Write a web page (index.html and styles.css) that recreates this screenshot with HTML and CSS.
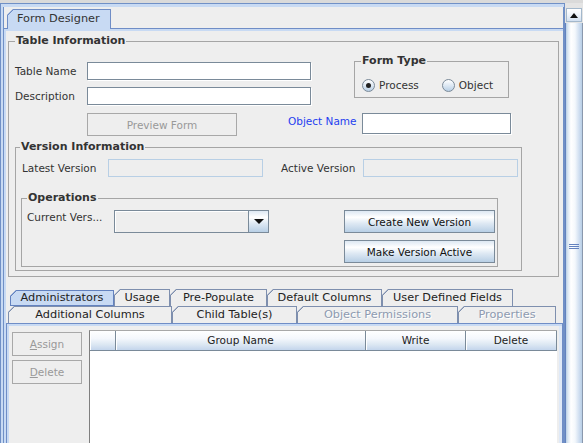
FILE: index.html
```html
<!DOCTYPE html>
<html lang="en">
<head>
<meta charset="UTF-8">
<meta name="viewport" content="width=device-width, initial-scale=1.0">
<title>Form Designer</title>
<link rel="stylesheet" href="styles.css">
</head>
<body>
    <div class="topstrip"></div>
    <div class="main">
        <div class="frame">
            <div class="tabstrip">
                <div class="tabgap"></div>
                <div class="tab">Form Designer</div>
                <div class="tabfill"></div>
            </div>
            <div class="panel">
                <fieldset class="group group-table">
                    <legend>Table Information</legend>
                    <div class="row-a">
                        <div class="name-col">
                            <div class="field-row">
                                <label class="lbl lbl-name">Table Name</label>
                                <input class="txt txt-name" type="text">
                            </div>
                            <div class="field-row second">
                                <label class="lbl lbl-name">Description</label>
                                <input class="txt txt-name" type="text">
                            </div>
                        </div>
                        <fieldset class="group group-type">
                            <legend>Form Type</legend>
                            <div class="radios">
                                <span class="radio on"></span><span class="radio-text">Process</span>
                                <span class="radio radio-2"></span><span class="radio-text">Object</span>
                            </div>
                        </fieldset>
                    </div>
                    <div class="row-b">
                        <button class="btn btn-off btn-preview" disabled>Preview Form</button>
                        <label class="lbl lbl-object">Object Name</label>
                        <input class="txt txt-object" type="text">
                    </div>
                    <fieldset class="group group-version">
                        <legend>Version Information</legend>
                        <div class="version-row">
                            <label class="lbl lbl-latest">Latest Version</label>
                            <input class="txt txt-ro" type="text" disabled>
                            <label class="lbl lbl-active">Active Version</label>
                            <input class="txt txt-ro" type="text" disabled>
                        </div>
                        <fieldset class="group group-ops">
                            <legend>Operations</legend>
                            <div class="ops-row">
                                <label class="lbl lbl-current">Current Vers...</label>
                                <div class="combo">
                                    <span class="combo-value"></span>
                                    <span class="combo-arrow"></span>
                                </div>
                                <div class="ops-buttons">
                                    <button class="btn btn-blue">Create New Version</button>
                                    <button class="btn btn-blue">Make Version Active</button>
                                </div>
                            </div>
                        </fieldset>
                    </fieldset>
                </fieldset>

                <div class="subtabs">
                    <div class="tabrow tabrow-1">
                        <div class="stab sel">Administrators</div>
                        <div class="stab">Usage</div>
                        <div class="stab">Pre-Populate</div>
                        <div class="stab">Default Columns</div>
                        <div class="stab">User Defined Fields</div>
                    </div>
                    <div class="tabrow tabrow-2">
                        <div class="stab">Additional Columns</div>
                        <div class="stab">Child Table(s)</div>
                        <div class="stab off">Object Permissions</div>
                        <div class="stab off">Properties</div>
                    </div>
                    <div class="subpanel">
                        <div class="side-buttons">
                            <button class="btn btn-off btn-side" disabled><u>A</u>ssign</button>
                            <button class="btn btn-off btn-side" disabled><u>D</u>elete</button>
                        </div>
                        <div class="grid">
                            <div class="grid-head">
                                <div class="hcell c0"></div>
                                <div class="hcell c1">Group Name</div>
                                <div class="hcell c2">Write</div>
                                <div class="hcell c3">Delete</div>
                            </div>
                            <div class="grid-body"></div>
                        </div>
                    </div>
                </div>
            </div>
        </div>
        <div class="vscroll">
            <div class="sb-up"></div>
            <div class="sb-thumb"><div class="sb-grip"></div></div>
        </div>
    </div>
</body>
</html>
```

FILE: styles.css
```css
html, body {
    height: 100%;
}
body {
    margin: 0;
    background-color: #eeeeee;
    font-family: "DejaVu Sans", Verdana, sans-serif;
    font-size: 10.5px;
    color: #333333;
    display: flex;
    flex-direction: column;
    overflow: hidden;
}
.topstrip {
    height: 3px;
    flex: none;
    background-color: #dadada;
}
.main {
    flex: 1;
    display: flex;
    min-height: 0;
}

/* outer frame + Form Designer tab */
.frame {
    width: 565px;
    box-sizing: border-box;
    border: 1px solid #7090c6;
    border-bottom: none;
    padding: 3px 0 0 2px;
    background-color: #c8daf3;
    display: flex;
    flex-direction: column;
}
.tabstrip {
    height: 22px;
    display: flex;
    background-color: #eeeeee;
    border-left: 1px solid #7090c6;
    border-right: 1px solid #7090c6;
}
.tabgap, .tabfill {
    box-sizing: border-box;
    height: 22px;
    border-bottom: 1px solid #6f8dc6;
}
.tabgap {
    width: 3px;
}
.tabfill {
    flex: 1;
}
.tab, .stab {
    box-sizing: border-box;
    clip-path: polygon(6px 0, 100% 0, 100% 100%, 0 100%, 0 6px);
}
.tab {
    margin-top: 2px;
    width: 104px;
    height: 20px;
    border: 1px solid #6f8dc6;
    border-bottom: none;
    padding-left: 9px;
    font-size: 11.3px;
    line-height: 17px;
    white-space: nowrap;
    background: linear-gradient(to bottom right, transparent 42%, #6f8dc6 42%, #6f8dc6 54%, transparent 54%) 0 0 / 7px 7px no-repeat border-box #c8daf3;
}
.panel {
    flex: 1;
    display: flex;
    flex-direction: column;
    background-color: #eeeeee;
    border-left: 1px solid #7090c6;
    border-right: 1px solid #7090c6;
    box-shadow: inset 2px 2px 0 #c8daf3;
    padding: 6px 4px 0 4px;
    min-height: 0;
}

/* titled groups */
.group {
    margin: 0;
    padding: 0;
    min-width: 0;
    box-sizing: border-box;
    border: 1px solid #a5a5a5;
}
.group legend {
    padding: 0 1px;
    font-weight: bold;
    font-size: 11px;
    line-height: 12px;
    color: #333333;
}
.group-table {
    padding: 8px 0 5px 6px;
}
.row-a {
    display: flex;
    align-items: flex-start;
}
.name-col {
    width: 296px;
    padding-top: 7px;
}
.field-row {
    display: flex;
    align-items: center;
}
.field-row.second {
    margin-top: 7px;
}
.lbl {
    white-space: nowrap;
}
.lbl-name {
    width: 72px;
}
.txt {
    box-sizing: border-box;
    margin: 0;
    padding: 0 3px;
    border: 1px solid #7a8a99;
    background-color: #ffffff;
    box-shadow: 1px 1px 0 #ffffff;
    font: inherit;
    outline: none;
}
.txt-name {
    width: 224px;
    height: 18px;
}
.group-type {
    margin-left: 43px;
    width: 155px;
    padding: 10px 0 4px 7px;
}
.group-type legend {
    margin-left: -1px;
}
.radios {
    height: 16px;
    display: flex;
    align-items: center;
}
.radio {
    box-sizing: border-box;
    width: 13px;
    height: 13px;
    border: 1px solid #7a8a99;
    border-radius: 50%;
    background: linear-gradient(#ffffff, #dde8f3 50%, #b8cfe5);
    display: flex;
    align-items: center;
    justify-content: center;
}
.radio.on::after {
    content: "";
    width: 5px;
    height: 5px;
    border-radius: 50%;
    background-color: #222222;
}
.radio-2 {
    margin-left: 23px;
}
.radio-text {
    margin-left: 4px;
}

.row-b {
    display: flex;
    align-items: flex-start;
    margin-top: 8px;
}
.btn {
    box-sizing: border-box;
    margin: 0;
    padding: 0;
    font: inherit;
    cursor: default;
}
.btn-off {
    border: 1px solid #a8a8a8;
    background-color: #eeeeee;
    color: #999999;
}
.btn-preview {
    margin-left: 72px;
    width: 150px;
    height: 23px;
}
.lbl-object {
    margin-left: 51px;
    width: 74px;
    line-height: 17px;
    color: #1f3ff0;
}
.txt-object {
    width: 149px;
    height: 21px;
}

.group-version {
    margin-top: 5px;
    width: 507px;
    padding: 6px 0 3px 6px;
}
.group-version > legend {
    margin-left: -2px;
}
.version-row {
    height: 18px;
    display: flex;
    align-items: center;
}
.lbl-latest {
    width: 86px;
}
.lbl-active {
    margin-left: 18px;
    width: 82px;
}
.txt-ro {
    width: 155px;
    height: 18px;
    border-color: #b8cfe5;
    background-color: #eeeeee;
    box-shadow: none;
}

.group-ops {
    margin: 15px 0 0 -1px;
    width: 477px;
    padding: 6px 0 3px 5px;
}
.ops-row {
    display: flex;
    align-items: flex-start;
}
.lbl-current {
    width: 87px;
    line-height: 14px;
}
.combo {
    box-sizing: border-box;
    width: 155px;
    height: 23px;
    border: 1px solid #7a8a99;
    display: flex;
}
.combo-value {
    flex: 1;
    background-color: #eeeeee;
    box-shadow: inset 1px 1px 0 #ffffff;
}
.combo-arrow {
    width: 19px;
    border-left: 1px solid #7a8a99;
    background: linear-gradient(#dde8f3, #ffffff 30%, #dde8f3 60%, #b8cfe5);
    display: flex;
    align-items: center;
    justify-content: center;
}
.combo-arrow::after {
    content: "";
    border-left: 5px solid transparent;
    border-right: 5px solid transparent;
    border-top: 5px solid #111111;
}
.ops-buttons {
    margin-left: 75px;
    display: flex;
    flex-direction: column;
    gap: 7px;
}
.btn-blue {
    width: 151px;
    height: 23px;
    border: 1px solid #7a8a99;
    background: linear-gradient(#dde8f3, #ffffff 30%, #dde8f3 60%, #b8cfe5);
    color: #111111;
}

/* lower tabbed pane */
.subtabs {
    flex: 1;
    margin: 12px -4px 0 -2px;
    display: flex;
    flex-direction: column;
    min-height: 0;
}
.tabrow {
    display: grid;
    height: 17px;
}
.tabrow-1 {
    padding-left: 4px;
    grid-template-columns: 104px 56px 97px 115px 131px;
}
.tabrow-2 {
    padding-left: 2px;
    grid-template-columns: 164px 125px 161px 98px;
}
.stab {
    height: 17px;
    border: 1px solid #7e8fae;
    border-bottom: none;
    font-size: 11.3px;
    line-height: 16px;
    text-align: center;
    white-space: nowrap;
    color: #222222;
    background: linear-gradient(to bottom right, transparent 42%, #7e8fae 42%, #7e8fae 54%, transparent 54%) 0 0 / 7px 7px no-repeat border-box #eeeeee;
}
.stab.sel {
    margin-top: 1px;
    height: 16px;
    line-height: 14px;
    border: 1px solid #6382bf;
    background: linear-gradient(to bottom right, transparent 42%, #6382bf 42%, #6382bf 54%, transparent 54%) 0 0 / 7px 7px no-repeat border-box #c8daf3;
}
.stab.off {
    color: #8d9ab0;
    text-shadow: 1px 1px 0 #ffffff;
}
.subpanel {
    flex: 1;
    display: flex;
    align-items: stretch;
    border: 1px solid #6f8dc6;
    border-bottom: none;
    box-shadow: inset 2px 2px 0 #c8daf3, inset -3px 0 0 #dfe9f7;
    padding: 6px 0 0 5px;
    min-height: 0;
}
.side-buttons {
    margin-top: 2px;
    width: 70px;
    display: flex;
    flex-direction: column;
    gap: 4px;
}
.btn-side {
    height: 24px;
}
.grid {
    margin-left: 7px;
    width: 468px;
    box-sizing: border-box;
    border-left: 1px solid #7f7f7f;
    border-top: 1px solid #a8a8a8;
    background-color: #ffffff;
    display: flex;
    flex-direction: column;
}
.grid-head {
    display: flex;
    height: 20px;
}
.hcell {
    box-sizing: border-box;
    height: 20px;
    border-right: 1px solid #7a8a99;
    border-bottom: 1px solid #7a8a99;
    box-shadow: inset 1px 0 0 #ffffff;
    background: linear-gradient(#ffffff, #f4f7fc 40%, #dde8f3 70%, #c4d5ec);
    text-align: center;
    line-height: 19px;
    color: #222222;
}
.c0 {
    width: 26px;
}
.c1 {
    width: 250px;
}
.c2 {
    width: 100px;
}
.c3 {
    flex: 1;
}
.grid-body {
    flex: 1;
}

/* vertical scroll bar */
.vscroll {
    width: 18px;
    display: flex;
    flex-direction: column;
    background-color: #e4e4e4;
    padding-top: 5px;
}
.sb-up {
    box-sizing: border-box;
    height: 14px;
    margin: 0 1px 0 1px;
    border: 1px solid #a3b8cc;
    background: linear-gradient(#ffffff, #eef3fa 50%, #d2e0f1);
    display: flex;
    align-items: center;
    justify-content: center;
}
.sb-up::after {
    content: "";
    border-left: 4px solid transparent;
    border-right: 4px solid transparent;
    border-bottom: 5px solid #111111;
}
.sb-thumb {
    flex: 1;
    margin-top: 1px;
    border-left: 1px solid #6382bf;
    border-right: 1px solid #8a98ad;
    background: linear-gradient(to right, #b8cfe5 0, #dde8f3 2px, #ffffff 5px, #f4f8fc 9px, #c8d9ee 14px, #b8cfe5 16px);
    padding-top: 221px;
}
.sb-grip {
    margin-left: 3px;
    width: 10px;
    height: 5px;
    background: repeating-linear-gradient(to bottom, #6382bf 0 1px, transparent 1px 2px);
}
```
